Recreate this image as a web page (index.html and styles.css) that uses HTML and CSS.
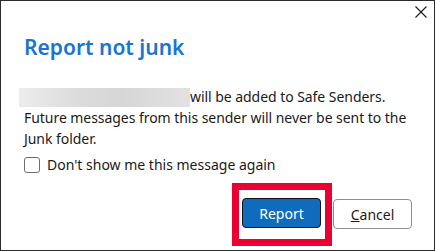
FILE: index.html
```html
<!DOCTYPE html>
<html lang="en">
<head>
<meta charset="utf-8">
<title>Report not junk</title>
<link rel="stylesheet" href="styles.css">
</head>
<body>
<div class="dialog">
  <div class="titlebar">
    <button class="close" aria-label="Close">
      <svg width="12" height="12" viewBox="0 0 12 12"><path d="M0.5 0.5 L11.5 11.5 M11.5 0.5 L0.5 11.5" stroke="#1a1a1a" stroke-width="1.1" fill="none"/></svg>
    </button>
  </div>
  <h1 class="title">Report not junk</h1>
  <p class="message"><span class="redacted"></span>will be added to Safe Senders.<br>Future messages from this sender will never be sent to the<br>Junk folder.</p>
  <label class="check"><span class="box"></span><span>Don't show me this message again</span></label>
  <div class="actions">
    <div class="highlight"><button class="btn primary">Report</button></div>
    <button class="btn secondary"><u>C</u>ancel</button>
  </div>
</div>
</body>
</html>
```
FILE: styles.css
```css
html, body {
  margin: 0;
  padding: 0;
  background: #fff;
}
.dialog {
  box-sizing: border-box;
  width: 435px;
  height: 251px;
  border: 1px solid #2b2b2b;
  background: #fff;
  font-family: "Noto Sans", "Open Sans", sans-serif;
  color: #1a1a1a;
  display: flex;
  flex-direction: column;
}
.titlebar {
  display: flex;
  justify-content: flex-end;
  height: 24px;
  padding: 5px 7px 0 0;
  box-sizing: border-box;
}
.close {
  border: 0;
  background: none;
  padding: 0;
  width: 12px;
  height: 12px;
  display: flex;
}
.title {
  margin: 8px 0 0 23px;
  font-size: 21px;
  line-height: 28px;
  font-weight: 600;
  color: #1a74d2;
}
.message {
  margin: 25px 0 0 23px;
  font-size: 14px;
  line-height: 21px;
  letter-spacing: -0.05px;
}
.redacted {
  display: inline-block;
  width: 171px;
  height: 19px;
  margin-left: -5px;
  vertical-align: -5px;
  background: linear-gradient(90deg, #ececec 0%, #dcdcdc 35%, #d6d6d6 60%, #e2e2e2 100%);
}
.check {
  display: flex;
  align-items: center;
  gap: 7px;
  margin: 6px 0 0 23px;
  font-size: 14px;
  line-height: 20px;
}
.box {
  box-sizing: border-box;
  width: 16px;
  height: 16px;
  border: 1px solid #6e6e6e;
  border-radius: 3px;
}
.actions {
  display: flex;
  justify-content: flex-end;
  align-items: flex-start;
  margin-top: 8px;
  padding-right: 22px;
  gap: 1px;
}
.highlight {
  border: 7px solid #eb0032;
  padding: 8px 4px 11px 3px;
}
.btn {
  box-sizing: border-box;
  width: 79px;
  height: 30px;
  border-radius: 4px;
  font-family: "Noto Sans", "Open Sans", sans-serif;
  font-size: 14px;
  padding: 0;
}
.primary {
  background: #0f6cbd;
  color: #fff;
  border: 1px solid #111;
}
.secondary {
  margin-top: 16px;
  background: #fff;
  color: #1a1a1a;
  border: 1px solid #8f8f8f;
}
```
